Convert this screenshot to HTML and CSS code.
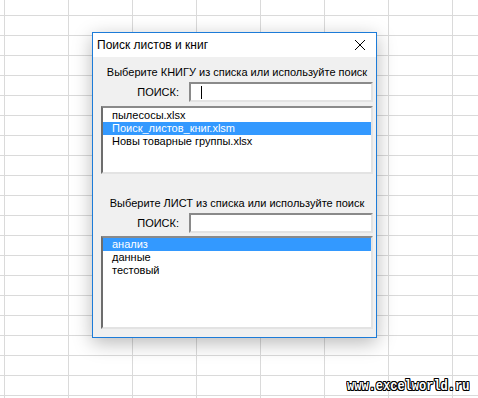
FILE: index.html
```html
<!DOCTYPE html>
<html lang="ru">
<head>
  <meta charset="UTF-8">
  <title>Поиск листов и книг</title>
  <link rel="stylesheet" href="styles.css">
</head>
<body>
  <div class="sheet">
    <div class="dialog">
      <div class="titlebar">
        <span class="title">Поиск листов и книг</span>
        <svg class="close" width="12" height="12" viewBox="0 0 12 12">
          <path d="M1 1L11 11M11 1L1 11" stroke="#000" stroke-width="1" fill="none"/>
        </svg>
      </div>
      <div class="dialog-body">
        <p class="hint">Выберите КНИГУ из списка или используйте поиск</p>
        <div class="search-row">
          <span class="search-label">ПОИСК:</span>
          <div class="field"><span class="caret"></span></div>
        </div>
        <ul class="listbox books">
          <li>пылесосы.xlsx</li>
          <li class="selected">Поиск_листов_книг.xlsm</li>
          <li>Новы товарные группы.xlsx</li>
        </ul>

        <p class="hint second">Выберите ЛИСТ из списка или используйте поиск</p>
        <div class="search-row">
          <span class="search-label">ПОИСК:</span>
          <div class="field"></div>
        </div>
        <ul class="listbox sheets">
          <li class="selected">анализ</li>
          <li>данные</li>
          <li>тестовый</li>
        </ul>
      </div>
    </div>
    <div class="watermark">www.excelworld.ru</div>
  </div>
</body>
</html>
```

FILE: styles.css
```css
html, body { margin: 0; padding: 0; }
body { font-family: "Liberation Sans", Arial, sans-serif; font-size: 11px; color: #000; }
.sheet {
  position: relative; width: 478px; height: 398px; overflow: hidden;
  background-color: #fff;
  background-image: linear-gradient(to right, #dadada 1px, transparent 1px), linear-gradient(to bottom, #dadada 1px, transparent 1px);
  background-size: 64px 20px;
  background-position: 4px 15px;
}
.dialog {
  width: 283px; margin: 0 0 0 92px; position: relative; top: 32px;
  border: 1px solid #1c7bd8; background: #f0f0f0;
  box-shadow: 0 5px 18px rgba(0, 0, 0, 0.28);
}
.titlebar { height: 24px; background: #fff; display: flex; align-items: center; justify-content: space-between; padding: 0 10px 0 4px; }
.title { font-size: 12px; }
.close { display: block; }
.dialog-body { padding: 0 3px 8px 8px; }
.hint { margin: 8px 0 0; line-height: 14px; text-align: center; }
.hint.second { margin-top: 22px; }
.search-row { display: flex; justify-content: flex-end; align-items: center; margin-top: 3px; }
.search-label { margin-right: 10px; }
.field {
  width: 180px; height: 16px; background: #fff;
  border: 2px solid; border-color: #8a8a8a #e3e3e3 #e3e3e3 #8a8a8a;
  display: flex; align-items: center;
}
.caret { width: 1px; height: 13px; background: #000; margin-left: 10px; }
.listbox {
  list-style: none; margin: 4px 0 0; padding: 1px 0 0;
  background: #fff; border: 2px solid; border-color: #8a8a8a #e3e3e3 #e3e3e3 #6d6d6d;
  box-sizing: border-box;
}
.listbox li { height: 13px; line-height: 13px; padding-left: 9px; }
.listbox li.selected { background: #3399ff; color: #fff; }
.books { height: 68px; }
.sheets { height: 93px; margin-top: 3px; padding-top: 0; }
.watermark {
  position: absolute; left: 347px; top: 379px;
  font-family: "Liberation Mono", monospace; font-weight: bold; font-size: 15px; line-height: 15px;
  transform: scaleX(0.8); transform-origin: left top;
  color: #fff;
  text-shadow: 1px 0 0 #000, -1px 0 0 #000, 0 1px 0 #000, 0 -1px 0 #000, 1px 1px 0 #000, -1px -1px 0 #000, 1px -1px 0 #000, -1px 1px 0 #000;
}
```
